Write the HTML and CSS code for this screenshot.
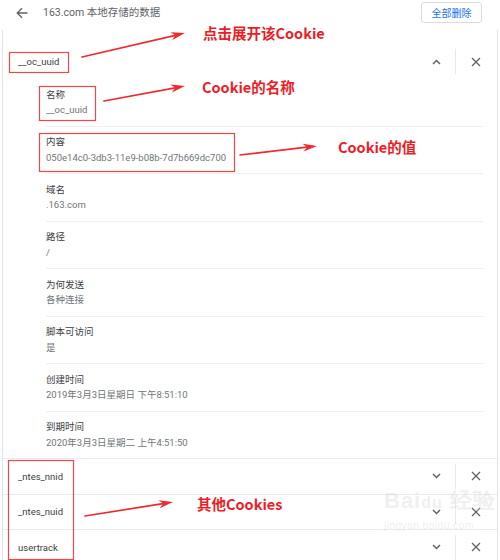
FILE: index.html
```html
<!DOCTYPE html>
<html lang="zh">
<head>
<meta charset="utf-8">
<title>163.com 本地存储的数据</title>
<link rel="stylesheet" href="styles.css">
</head>
<body>
<div class="page">
  <header class="header">
    <svg class="back" width="12" height="12" viewBox="0 0 12 12"><path d="M11.5 6H1.2M6 1.2L1.2 6 6 10.8" fill="none" stroke="#5f6368" stroke-width="1.3"/></svg>
    <div class="title">163.com 本地存储的数据</div>
    <button class="remove-all">全部删除</button>
  </header>

  <div class="list">
    <div class="row">
      <div class="name">__oc_uuid</div>
      <div class="icon-btn"><svg width="9" height="6" viewBox="0 0 9 6"><path d="M1 5L4.5 1.5 8 5" fill="none" stroke="#5f6368" stroke-width="1.5"/></svg></div>
      <div class="sep"></div>
      <div class="icon-btn close"><svg width="10" height="10" viewBox="0 0 10 10"><path d="M1 1L9 9M9 1L1 9" fill="none" stroke="#5f6368" stroke-width="1.3"/></svg></div>
    </div>
    <div class="details">
      <div class="item"><div class="label">名称</div><div class="value">__oc_uuid</div></div>
      <div class="item"><div class="label">内容</div><div class="value">050e14c0-3db3-11e9-b08b-7d7b669dc700</div></div>
      <div class="item"><div class="label">域名</div><div class="value">.163.com</div></div>
      <div class="item"><div class="label">路径</div><div class="value">/</div></div>
      <div class="item"><div class="label">为何发送</div><div class="value">各种连接</div></div>
      <div class="item"><div class="label">脚本可访问</div><div class="value">是</div></div>
      <div class="item"><div class="label">创建时间</div><div class="value">2019年3月3日星期日 下午8:51:10</div></div>
      <div class="item"><div class="label">到期时间</div><div class="value">2020年3月3日星期二 上午4:51:50</div></div>
    </div>
    <div class="row bordered">
      <div class="name">_ntes_nnid</div>
      <div class="icon-btn"><svg width="9" height="6" viewBox="0 0 9 6"><path d="M1 1L4.5 4.5 8 1" fill="none" stroke="#5f6368" stroke-width="1.5"/></svg></div>
      <div class="sep"></div>
      <div class="icon-btn close"><svg width="10" height="10" viewBox="0 0 10 10"><path d="M1 1L9 9M9 1L1 9" fill="none" stroke="#5f6368" stroke-width="1.3"/></svg></div>
    </div>
    <div class="row bordered">
      <div class="name">_ntes_nuid</div>
      <div class="icon-btn"><svg width="9" height="6" viewBox="0 0 9 6"><path d="M1 1L4.5 4.5 8 1" fill="none" stroke="#5f6368" stroke-width="1.5"/></svg></div>
      <div class="sep"></div>
      <div class="icon-btn close"><svg width="10" height="10" viewBox="0 0 10 10"><path d="M1 1L9 9M9 1L1 9" fill="none" stroke="#5f6368" stroke-width="1.3"/></svg></div>
    </div>
    <div class="row bordered">
      <div class="name">usertrack</div>
      <div class="icon-btn"><svg width="9" height="6" viewBox="0 0 9 6"><path d="M1 1L4.5 4.5 8 1" fill="none" stroke="#5f6368" stroke-width="1.5"/></svg></div>
      <div class="sep"></div>
      <div class="icon-btn close"><svg width="10" height="10" viewBox="0 0 10 10"><path d="M1 1L9 9M9 1L1 9" fill="none" stroke="#5f6368" stroke-width="1.3"/></svg></div>
    </div>
  </div>

  <div class="watermark">
    <div class="wm-logo">Bai<span class="wm-du">du</span> 经验</div>
    <div class="wm-url">jingyan.baidu.com</div>
  </div>

  <svg class="annot" width="500" height="560" viewBox="0 0 500 560">
    <g fill="none" stroke="#f0474b" stroke-width="1.2">
      <rect x="9.5" y="52.5" width="59" height="20"/>
      <rect x="39.5" y="86.5" width="56" height="34"/>
      <rect x="39.5" y="133.5" width="195" height="38"/>
      <rect x="8.5" y="460.5" width="65" height="99"/>
    </g>
    <g stroke="#ee2a2f" stroke-width="1.7" stroke-linecap="round">
      <line x1="82" y1="57" x2="175.3" y2="35.3"/>
      <line x1="104" y1="101" x2="175.2" y2="87.8"/>
      <line x1="240" y1="155" x2="307" y2="147.2"/>
      <line x1="85" y1="516" x2="163.1" y2="503.6"/>
    </g>
    <g fill="#ee2a2f">
      <polygon points="185,33 172.28,40.07 175.26,35.27 170.46,32.29"/>
      <polygon points="185,86 171.96,92.48 175.17,87.82 170.50,84.62"/>
      <polygon points="317,146 303.55,151.60 307.07,147.16 302.63,143.66"/>
      <polygon points="173,502 159.80,508.15 163.12,503.57 158.54,500.25"/>
    </g>
  </svg>
  <div class="note note-1">点击展开该Cookie</div>
  <div class="note note-2">Cookie的名称</div>
  <div class="note note-3">Cookie的值</div>
  <div class="note note-4">其他Cookies</div>
</div>
</body>
</html>
```

FILE: styles.css
```css
html, body {
  margin: 0;
  padding: 0;
  background: #ffffff;
}

body {
  font-family: Roboto, "Noto Sans CJK SC", sans-serif;
  color: #3c4043;
}

.page {
  position: relative;
  width: 500px;
  height: 560px;
  overflow: hidden;
}

.header {
  display: flex;
  align-items: flex-start;
  height: 30px;
}

.back {
  margin: 7px 0 0 16px;
  flex: none;
}

.title {
  margin-left: 15px;
  font-size: 10.5px;
  line-height: 26px;
  color: #5f6368;
}

.remove-all {
  margin: 2px 18px 0 auto;
  width: 61px;
  height: 21px;
  padding: 0;
  border: 1px solid #dadce0;
  border-radius: 3px;
  background: #fff;
  color: #1a73e8;
  font-family: "Noto Sans CJK SC", sans-serif;
  font-size: 10px;
  line-height: 19px;
}

.list {
  margin: 0 2px;
  padding-top: 14px;
  border-left: 1px solid #e3e3e3;
  border-right: 1px solid #e3e3e3;
  height: 600px;
}

.row {
  display: flex;
  align-items: center;
  height: 35px;
  padding-right: 2px;
}

.row.bordered {
  height: 34.5px;
  border-top: 1px solid #ebebeb;
}

.name {
  flex: 1;
  padding-left: 15px;
  font-size: 9.5px;
  color: #3c4043;
}

.icon-btn {
  width: 38px;
  height: 25px;
  display: flex;
  align-items: center;
  justify-content: center;
}

.icon-btn.close {
  width: 39px;
}

.sep {
  width: 1px;
  height: 25px;
  background: #e8e8e8;
}

.details {
  padding-left: 43px;
  padding-right: 14px;
}

.item {
  padding: 7.5px 0 8px;
  border-bottom: 1px solid #efefef;
}

.item:last-child {
  border-bottom: none;
}

.label {
  font-size: 9.5px;
  line-height: 15.5px;
  color: #3c4043;
}

.value {
  font-size: 9.5px;
  line-height: 15.5px;
  color: #70757a;
}

.annot {
  position: absolute;
  top: 0;
  left: 0;
  pointer-events: none;
}

.note {
  position: absolute;
  font-family: "Noto Sans CJK SC", sans-serif;
  font-weight: 700;
  font-size: 14.5px;
  line-height: 20px;
  color: #ee1c25;
  white-space: nowrap;
}

.note-1 { left: 203px; top: 23px; }
.note-2 { left: 202px; top: 77px; }
.note-3 { left: 338px; top: 137px; }
.note-4 { left: 197px; top: 494px; }

.watermark {
  position: absolute;
  left: 384px;
  top: 487px;
  color: rgba(215, 215, 215, 0.4);
  pointer-events: none;
}

.wm-logo {
  font-family: "Liberation Sans", sans-serif;
  font-weight: 700;
  font-size: 22px;
  line-height: 28px;
  letter-spacing: 1px;
}

.wm-du {
  font-size: 16px;
}

.wm-url {
  font-family: "Liberation Sans", sans-serif;
  font-size: 10.5px;
  line-height: 16px;
  letter-spacing: 0.3px;
}
```
